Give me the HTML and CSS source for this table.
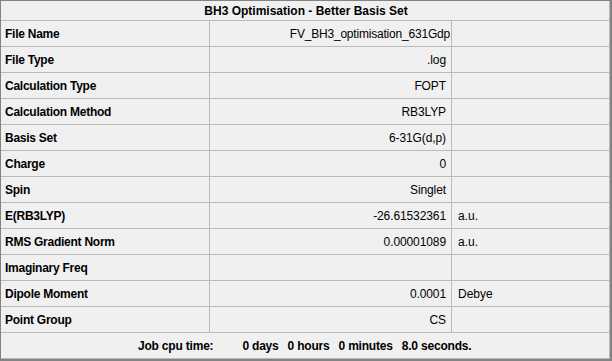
FILE: index.html
```html
<!DOCTYPE html>
<html>
<head>
<meta charset="utf-8">
<link rel="stylesheet" href="styles.css">
</head>
<body>
<div class="frame">
  <div class="grid">
    <div class="title">BH3 Optimisation - Better Basis Set</div>

    <div class="label">File Name</div><div class="val val-long">FV_BH3_optimisation_631Gdp</div><div class="unit"></div>
    <div class="label">File Type</div><div class="val">.log</div><div class="unit"></div>
    <div class="label">Calculation Type</div><div class="val">FOPT</div><div class="unit"></div>
    <div class="label">Calculation Method</div><div class="val">RB3LYP</div><div class="unit"></div>
    <div class="label">Basis Set</div><div class="val">6-31G(d,p)</div><div class="unit"></div>
    <div class="label">Charge</div><div class="val">0</div><div class="unit"></div>
    <div class="label">Spin</div><div class="val">Singlet</div><div class="unit"></div>
    <div class="label">E(RB3LYP)</div><div class="val">-26.61532361</div><div class="unit">a.u.</div>
    <div class="label">RMS Gradient Norm</div><div class="val">0.00001089</div><div class="unit">a.u.</div>
    <div class="label">Imaginary Freq</div><div class="val"></div><div class="unit"></div>
    <div class="label">Dipole Moment</div><div class="val">0.0001</div><div class="unit">Debye</div>
    <div class="label">Point Group</div><div class="val">CS</div><div class="unit"></div>

    <div class="footer">
      <span class="f-label">Job cpu time:</span>
      <span class="f-part f-first">0 days</span>
      <span class="f-part">0 hours</span>
      <span class="f-part">0 minutes</span>
      <span class="f-part">8.0 seconds.</span>
    </div>
  </div>
</div>
</body>
</html>
```
FILE: styles.css
```css
html, body {
  margin: 0;
  padding: 0;
  background: #f0f0f0;
}

.frame {
  width: 609px;
  height: 358px;
  border-top: 1px solid #838383;
  border-left: 1px solid #838383;
  border-right: 2px solid #838383;
  border-bottom: 2px solid #838383;
  background: #f0f0f0;
  font-family: "Liberation Sans", Arial, sans-serif;
  font-size: 12px;
  color: #000;
}

.grid {
  display: grid;
  grid-template-columns: 209px 242px 158px;
  grid-template-rows: 20px repeat(12, 26px) 26px;
}

.grid > div {
  box-sizing: border-box;
  border-bottom: 1px solid #b9b9b9;
  display: flex;
  align-items: center;
  white-space: nowrap;
  overflow: hidden;
}

.title {
  grid-column: 1 / 4;
  justify-content: center;
  font-weight: bold;
  border-right: 1px solid #b9b9b9;
  padding-left: 2px;
}

.label {
  font-weight: bold;
  padding-left: 4px;
  border-right: 1px solid #b9b9b9;
  letter-spacing: -0.25px;
}

.val {
  justify-content: flex-end;
  padding-right: 5px;
  border-right: 1px solid #b9b9b9;
  letter-spacing: -0.1px;
}

.val-long {
  padding-right: 1px;
  letter-spacing: -0.2px;
}

.unit {
  padding-left: 6px;
  border-right: 1px solid #b9b9b9;
}

.footer {
  grid-column: 1 / 4;
  font-weight: bold;
  padding-left: 137px;
  border-right: 1px solid #b9b9b9;
  letter-spacing: -0.2px;
}

.f-part {
  margin-left: 9px;
}

.f-first {
  margin-left: 29px;
}
```
